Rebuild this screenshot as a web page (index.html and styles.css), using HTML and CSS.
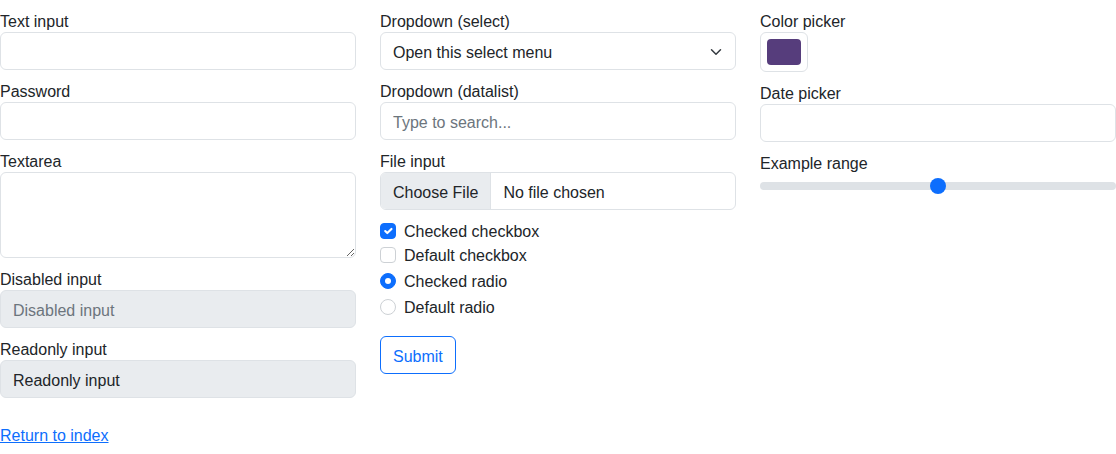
FILE: index.html
```html
<!DOCTYPE html>
<html lang="en">
<head>
<meta charset="utf-8">
<title>Forms</title>
<link rel="stylesheet" href="styles.css">
</head>
<body>
<main class="page">
  <form class="grid">
    <div class="col">
      <div class="group">
        <label class="label" for="t1">Text input</label>
        <input class="control" id="t1" type="text">
      </div>
      <div class="group">
        <label class="label" for="t2">Password</label>
        <input class="control" id="t2" type="password">
      </div>
      <div class="group">
        <label class="label" for="t3">Textarea</label>
        <textarea class="control area" id="t3" rows="3"></textarea>
      </div>
      <div class="group">
        <label class="label" for="t4">Disabled input</label>
        <input class="control muted" id="t4" type="text" placeholder="Disabled input" disabled>
      </div>
      <div class="group">
        <label class="label" for="t5">Readonly input</label>
        <input class="control muted" id="t5" type="text" value="Readonly input" readonly>
      </div>
    </div>

    <div class="col">
      <div class="group">
        <label class="label" for="s1">Dropdown (select)</label>
        <div class="select-wrap">
          <select class="control select" id="s1">
            <option>Open this select menu</option>
            <option>One</option>
            <option>Two</option>
          </select>
          <svg class="chevron" width="16" height="12" viewBox="0 0 16 16" aria-hidden="true"><path d="M2 5l6 6 6-6" fill="none" stroke="#343a40" stroke-width="2" stroke-linecap="round" stroke-linejoin="round"/></svg>
        </div>
      </div>
      <div class="group">
        <label class="label" for="s2">Dropdown (datalist)</label>
        <input class="control" id="s2" type="text" placeholder="Type to search...">
      </div>
      <div class="group">
        <span class="label">File input</span>
        <div class="file">
          <span class="file-btn">Choose File</span>
          <span class="file-name">No file chosen</span>
        </div>
      </div>
      <div class="checks">
        <label class="check">
          <span class="box on"><svg width="16" height="16" viewBox="0 0 20 20"><path d="M6 10l3 3l6-6" fill="none" stroke="#fff" stroke-width="3" stroke-linecap="round" stroke-linejoin="round"/></svg></span>
          <span class="check-text">Checked checkbox</span>
        </label>
        <label class="check">
          <span class="box"></span>
          <span class="check-text">Default checkbox</span>
        </label>
        <label class="check radio">
          <span class="box round on"><span class="dot"></span></span>
          <span class="check-text">Checked radio</span>
        </label>
        <label class="check radio">
          <span class="box round"></span>
          <span class="check-text">Default radio</span>
        </label>
      </div>
      <div class="actions">
        <button class="btn" type="button">Submit</button>
      </div>
    </div>

    <div class="col">
      <div class="group">
        <span class="label">Color picker</span>
        <div class="color"><span class="swatch"></span></div>
      </div>
      <div class="group">
        <label class="label" for="d1">Date picker</label>
        <input class="control" id="d1" type="text">
      </div>
      <div class="group">
        <span class="label">Example range</span>
        <div class="range">
          <div class="track"></div>
          <span class="thumb"></span>
        </div>
      </div>
    </div>
  </form>
  <p class="back"><a href="#">Return to index</a></p>
</main>
</body>
</html>
```

FILE: styles.css
```css
* { box-sizing: border-box; }

body {
  margin: 0;
  font-family: "Liberation Sans", Arial, sans-serif;
  font-size: 16px;
  line-height: 24px;
  color: #212529;
  background: #fff;
}

.page {
  padding-top: 8px;
}

.grid {
  display: grid;
  grid-template-columns: repeat(3, 1fr);
  column-gap: 24px;
  align-items: start;
  margin: 0;
}

.col {
  display: flex;
  flex-direction: column;
  gap: 8px;
}

.group {
  display: flex;
  flex-direction: column;
}

.label {
  display: block;
  height: 24px;
  padding-top: 4px;
  line-height: 20px;
}

.control {
  display: block;
  width: 100%;
  height: 38px;
  padding: 8px 12px 4px;
  font: inherit;
  line-height: 24px;
  color: #212529;
  background: #fff;
  border: 1px solid #dee2e6;
  border-radius: 6px;
  outline: none;
  margin: 0;
}

.control::placeholder { color: #6c757d; opacity: 1; }

.area {
  height: 86px;
  resize: vertical;
}

.muted {
  background: #e9ecef;
}

.muted:disabled { color: #6c757d; }

.select-wrap {
  position: relative;
}

.select {
  appearance: none;
  -webkit-appearance: none;
  padding-right: 36px;
}

.chevron {
  position: absolute;
  right: 12px;
  top: 14px;
  pointer-events: none;
}

.file {
  display: flex;
  height: 38px;
  border: 1px solid #dee2e6;
  border-radius: 6px;
  overflow: hidden;
}

.file-btn {
  display: flex;
  align-items: center;
  padding: 4px 12px 0;
  background: #e9ecef;
  border-right: 1px solid #dee2e6;
}

.file-name {
  display: flex;
  align-items: center;
  padding: 4px 12px 0;
}

.checks {
  display: flex;
  flex-direction: column;
  padding-top: 1px;
}

.check {
  display: flex;
  align-items: center;
  gap: 8px;
  height: 24px;
}

.check-text {
  padding-top: 2px;
}

.check.radio { margin-top: 2px; }

.box {
  flex: none;
  width: 16px;
  height: 16px;
  border: 1px solid #cdd1d5;
  border-radius: 4px;
  background: #fff;
  display: flex;
  align-items: center;
  justify-content: center;
}

.box.on {
  background: #0d6efd;
  border-color: #0d6efd;
}

.box.on svg { display: block; }

.box.round { border-radius: 50%; }

.dot {
  width: 6px;
  height: 6px;
  border-radius: 50%;
  background: #fff;
}

.actions {
  margin-top: 9px;
}

.btn {
  display: inline-block;
  height: 38px;
  padding: 8px 12px 4px;
  font: inherit;
  line-height: 24px;
  color: #0d6efd;
  background: #fff;
  border: 1px solid #0d6efd;
  border-radius: 6px;
}

.color {
  width: 48px;
  height: 40px;
  padding: 6px;
  border: 1px solid #dee2e6;
  border-radius: 6px;
  background: #fff;
}

.swatch {
  display: block;
  width: 100%;
  height: 100%;
  background: #563d7c;
  border-radius: 4px;
}

.range {
  position: relative;
  height: 24px;
  display: flex;
  align-items: center;
}

.track {
  width: 100%;
  height: 8px;
  border-radius: 4px;
  background: #dee2e6;
}

.thumb {
  position: absolute;
  left: calc(50% - 8px);
  top: 4px;
  width: 16px;
  height: 16px;
  border-radius: 50%;
  background: #0d6efd;
}

.back {
  margin: 26px 0 0;
}

.back a {
  color: #0d6efd;
  text-decoration: underline;
}
```
